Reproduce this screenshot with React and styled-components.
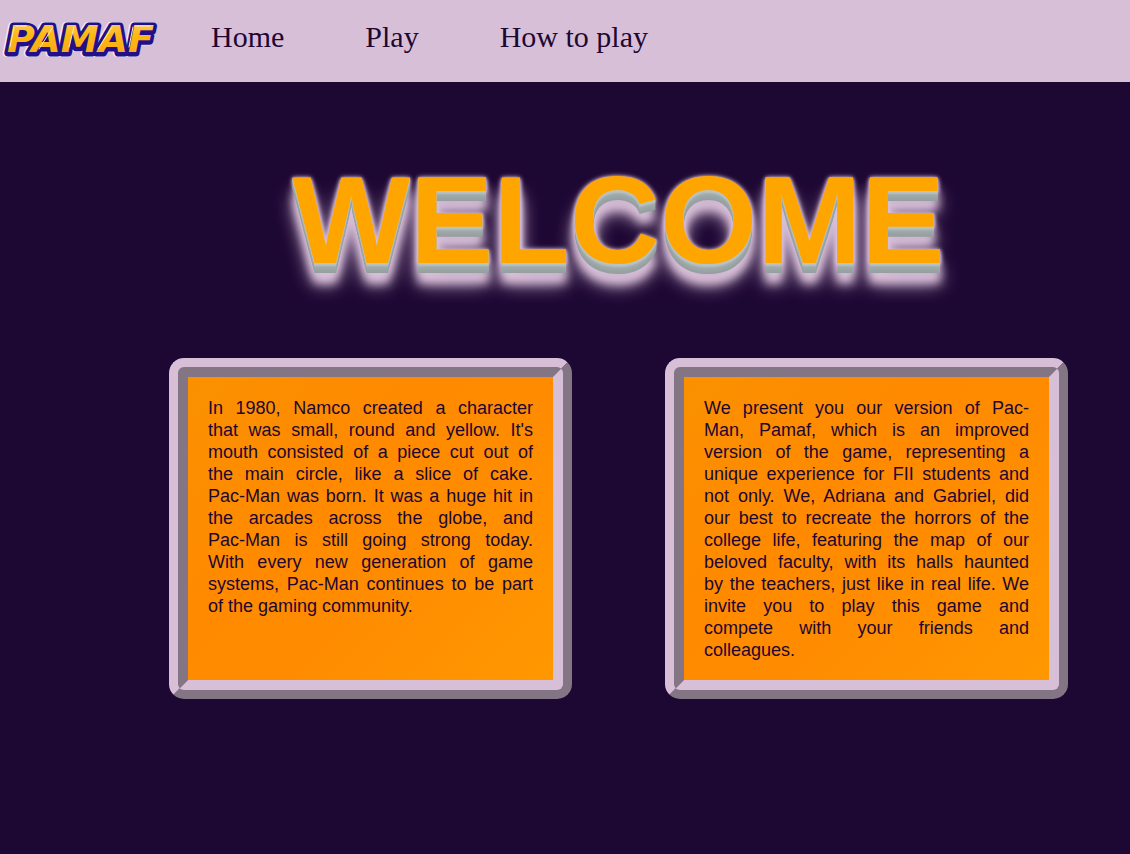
import React from "react";
import styled, { createGlobalStyle } from "styled-components";

const GlobalStyle = createGlobalStyle`
  body {
    margin: 0;
    background: #1d0733;
    color: #1d0733;
    font-family: Arial, "Liberation Sans", sans-serif;
  }
`;

const Header = styled.header`
  display: flex;
  align-items: flex-start;
  height: 82px;
  background: thistle;
`;

const LogoLink = styled.a`
  display: block;
  width: 160px;
  height: 76px;
`;

const Nav = styled.nav`
  display: flex;
  gap: 81px;
  padding: 20px 0 0 51px;
`;

const NavLink = styled.a`
  color: #1d0733;
  font-family: "Times New Roman", "Liberation Serif", serif;
  font-size: 30px;
  line-height: 34px;
  text-decoration: none;
`;

const Main = styled.main`
  padding: 66px 62px 0 169px;
`;

const Title = styled.h1`
  margin: 0;
  color: orange;
  font-size: 125px;
  font-weight: bold;
  line-height: 144px;
  text-align: center;
  text-shadow:
    0 1px 0 #bdc3c3,
    0 2px 0 #b9c0c0,
    0 3px 0 #b4bcbc,
    0 4px 0 #a6b0b0,
    0 5px 0 #a0aaaa,
    0 6px 0 #9ca7a7,
    0 7px 0 #9aa5a5,
    0 8px 0 #98a3a3,
    0 9px 0 #96a1a1,
    0 10px 0 #949f9f,
    0 0 5px thistle,
    0 1px 3px thistle,
    0 3px 5px thistle,
    0 10px 10px thistle,
    0 20px 10px thistle,
    0 20px 20px thistle;
`;

const Cards = styled.div`
  display: grid;
  grid-template-columns: 403px 403px;
  justify-content: space-between;
  margin-top: 66px;
`;

const Card = styled.section`
  box-sizing: border-box;
  padding: 20px 20px 19px;
  border: 19px ridge thistle;
  border-radius: 15px;
  background: linear-gradient(135deg, #fa9100, #ff8a00 35%, #ff8c00 60%, #ff9800);
`;

const CardText = styled.p`
  margin: 0;
  font-size: 18px;
  line-height: 22px;
`;

const Line = styled.span`
  display: block;
  text-align: justify;
  text-align-last: justify;

  &:last-child {
    text-align-last: left;
  }
`;

const LogoSvg = styled.svg`
  display: block;
`;

const Letters = styled.text`
  font-family: "DejaVu Sans", sans-serif;
  font-size: 38px;
  font-style: italic;
  font-weight: bold;
  stroke-linejoin: round;
`;

const Logo = () => (
  <LogoSvg width="160" height="76" viewBox="0 0 160 76" role="img" aria-label="PAMAF">
    <defs>
      <linearGradient id="gold" x1="0" y1="0" x2="0" y2="1">
        <stop offset="0" stopColor="#ffd27a" />
        <stop offset="0.4" stopColor="#fdb913" />
        <stop offset="1" stopColor="#f9a31a" />
      </linearGradient>
    </defs>
    <Letters x="6" y="53" fill="#f4edfa" stroke="#f4edfa" strokeWidth="8">PAMAF</Letters>
    <Letters x="7" y="53" fill="#21108a" stroke="#21108a" strokeWidth="7" aria-hidden="true">PAMAF</Letters>
    <Letters x="7" y="52" fill="url(#gold)" aria-hidden="true">PAMAF</Letters>
    <g fill="none" stroke="#ffe9c4" strokeWidth="1" strokeLinecap="round">
      <path d="M14 27 L10 47 M16 26 H26" />
      <path d="M53 27 L39 49 M74 27 L69 47" />
      <path d="M112 27 L98 49 M133 27 L129 47 M135 26 H150" />
    </g>
  </LogoSvg>
);

const links = ["Home", "Play", "How to play"];

const paragraphs = [
  [
    "In 1980, Namco created a character",
    "that was small, round and yellow. It's",
    "mouth consisted of a piece cut out of",
    "the main circle, like a slice of cake.",
    "Pac-Man was born. It was a huge hit in",
    "the arcades across the globe, and",
    "Pac-Man is still going strong today.",
    "With every new generation of game",
    "systems, Pac-Man continues to be part",
    "of the gaming community.",
  ],
  [
    "We present you our version of Pac-",
    "Man, Pamaf, which is an improved",
    "version of the game, representing a",
    "unique experience for FII students and",
    "not only. We, Adriana and Gabriel, did",
    "our best to recreate the horrors of the",
    "college life, featuring the map of our",
    "beloved faculty, with its halls haunted",
    "by the teachers, just like in real life. We",
    "invite you to play this game and",
    "compete with your friends and",
    "colleagues.",
  ],
];

export default function App() {
  return (
    <>
      <GlobalStyle />
      <Header>
        <LogoLink href="#"><Logo /></LogoLink>
        <Nav>
          {links.map((label) => (
            <NavLink key={label} href="#">{label}</NavLink>
          ))}
        </Nav>
      </Header>
      <Main>
        <Title>WELCOME</Title>
        <Cards>
          {paragraphs.map((lines) => (
            <Card key={lines[0]}>
              <CardText>
                {lines.map((line) => (
                  <Line key={line}>{line}</Line>
                ))}
              </CardText>
            </Card>
          ))}
        </Cards>
      </Main>
    </>
  );
}
